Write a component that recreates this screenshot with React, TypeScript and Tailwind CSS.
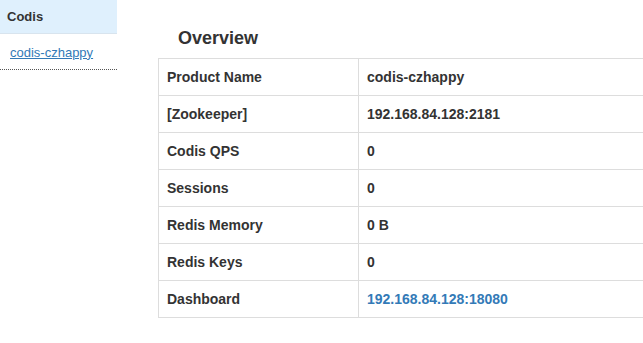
import React from 'react';

const rows: { label: string; value: string; link?: boolean }[] = [
  { label: 'Product Name', value: 'codis-czhappy' },
  { label: '[Zookeeper]', value: '192.168.84.128:2181' },
  { label: 'Codis QPS', value: '0' },
  { label: 'Sessions', value: '0' },
  { label: 'Redis Memory', value: '0 B' },
  { label: 'Redis Keys', value: '0' },
  { label: 'Dashboard', value: '192.168.84.128:18080', link: true },
];

const App = () => {
  return (
    <div
      className="flex w-[643px] h-[343px] overflow-hidden bg-white text-[#333] text-[13px]"
      style={{ fontFamily: '"Liberation Sans", Arial, sans-serif' }}
    >
      <div className="w-[117px] shrink-0">
        <div className="h-[34px] bg-[#dff0fd] border-b border-[#d8e4ee] flex items-center px-[7px] font-bold">
          Codis
        </div>
        <div className="h-[36px] border-b border-dotted border-[#555] flex items-center px-[10px]">
          <a href="#" className="text-[#337ab7] underline leading-none mt-[1px]">
            codis-czhappy
          </a>
        </div>
      </div>
      <div className="flex-1 pl-[41px] pt-[27px]">
        <h2 className="text-[18px] font-bold leading-[22px] pl-[20px] mb-[9px]">Overview</h2>
        <table className="w-[560px] border-collapse text-[14px]">
          <tbody>
            {rows.map((r) => (
              <tr key={r.label} className="h-[37px]">
                <td className="w-[200px] border border-[#ddd] px-[8px] font-bold">{r.label}</td>
                <td className="border border-[#ddd] px-[8px] font-bold">
                  {r.link ? <a href="#" className="text-[#337ab7]">{r.value}</a> : r.value}
                </td>
              </tr>
            ))}
          </tbody>
        </table>
      </div>
    </div>
  );
};

export default App;
